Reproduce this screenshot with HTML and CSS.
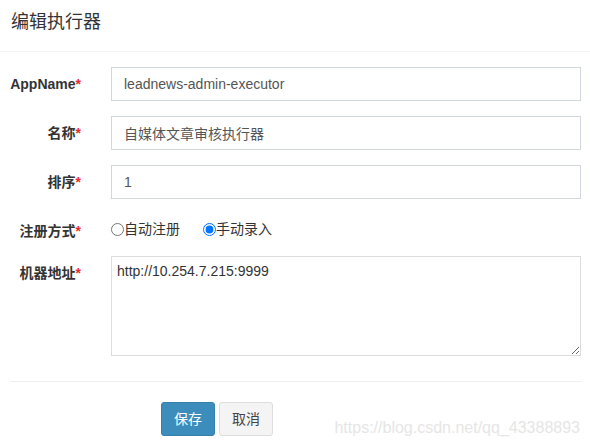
FILE: index.html
```html
<!DOCTYPE html>
<html lang="zh-CN">
<head>
<meta charset="utf-8">
<title>编辑执行器</title>
<link rel="stylesheet" href="styles.css">
</head>
<body>
<div class="modal">
  <div class="modal-header">
    <h4 class="modal-title">编辑执行器</h4>
  </div>
  <form class="modal-body">
    <div class="form-row">
      <label class="control-label">AppName<span class="req">*</span></label>
      <input class="form-control" type="text" value="leadnews-admin-executor">
    </div>
    <div class="form-row">
      <label class="control-label">名称<span class="req">*</span></label>
      <input class="form-control" type="text" value="自媒体文章审核执行器">
    </div>
    <div class="form-row">
      <label class="control-label">排序<span class="req">*</span></label>
      <input class="form-control" type="text" value="1">
    </div>
    <div class="form-row radio-row">
      <label class="control-label">注册方式<span class="req">*</span></label>
      <div class="radios">
        <label class="radio-inline"><input type="radio" name="addressType" value="0">自动注册</label>
        <label class="radio-inline"><input type="radio" name="addressType" value="1" checked>手动录入</label>
      </div>
    </div>
    <div class="form-row">
      <label class="control-label">机器地址<span class="req">*</span></label>
      <textarea class="form-control textarea">http://10.254.7.215:9999</textarea>
    </div>
    <hr class="divider">
    <div class="actions">
      <button type="button" class="btn btn-primary">保存</button>
      <button type="button" class="btn btn-default">取消</button>
    </div>
  </form>
</div>
<div class="watermark">https://blog.csdn.net/qq_43388893</div>
</body>
</html>
```
FILE: styles.css
```css
* { box-sizing: border-box; }
html, body {
  margin: 0;
  padding: 0;
  background: #fff;
}
body {
  width: 590px;
  height: 444px;
  overflow: hidden;
  position: relative;
  font-family: "Liberation Sans", Arial, "Noto Sans CJK SC", sans-serif;
  font-size: 14px;
  color: #333;
}
.modal-header {
  height: 52px;
  padding: 10px 11px 0;
  border-bottom: 1px solid #f4f4f4;
}
.modal-title {
  margin: 0;
  font-size: 18px;
  font-weight: normal;
  line-height: 25px;
  color: #333;
}
.modal-body {
  padding: 15px 9px 0 0;
  margin: 0;
}
.form-row {
  display: grid;
  grid-template-columns: 81px 1fr;
  column-gap: 30px;
  margin-bottom: 15px;
}
.control-label {
  text-align: right;
  font-weight: bold;
  padding-top: 7px;
  line-height: 20px;
  color: #333;
  white-space: nowrap;
}
.req { color: #f0262d; }
.form-control {
  display: block;
  width: 100%;
  height: 34px;
  padding: 6px 12px;
  font-family: inherit;
  font-size: 14px;
  line-height: 20px;
  color: #555;
  background: #fff;
  border: 1px solid #d2d6de;
  border-radius: 0;
  outline: none;
}
.textarea {
  height: 100px;
  padding: 4px 5px;
  color: #333;
  border-color: #dcdcdc;
  resize: vertical;
}
.radio-row { height: 27px; }
.radios {
  display: flex;
  gap: 23px;
  padding-top: 3px;
}
.radio-inline {
  display: flex;
  align-items: center;
  line-height: 20px;
  color: #333;
}
.radio-inline input {
  margin: 0;
  width: 13px;
  height: 13px;
  accent-color: #0075ff;
}
.divider {
  margin: 25px 0 0 10px;
  border: 0;
  border-top: 1px solid #eee;
  height: 0;
}
.actions {
  display: flex;
  gap: 4px;
  padding: 20px 0 0 161px;
}
.btn {
  height: 34px;
  padding: 6px 12px;
  font-family: inherit;
  font-size: 14px;
  line-height: 20px;
  border-radius: 3px;
  border: 1px solid transparent;
  cursor: pointer;
}
.btn-primary {
  background: #3c8dbc;
  border-color: #367fa9;
  color: #fff;
}
.btn-default {
  background: #f4f4f4;
  border-color: #ddd;
  color: #444;
}
.watermark {
  position: absolute;
  right: 10px;
  top: 418px;
  font-size: 16px;
  line-height: 20px;
  color: #e6e6e6;
  white-space: nowrap;
}
```
